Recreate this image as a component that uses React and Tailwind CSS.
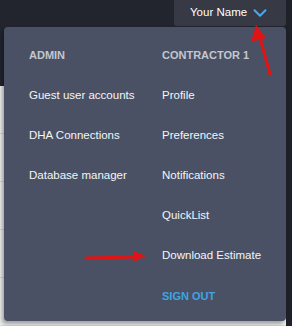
import React from "react";
import { ChevronDown } from "lucide-react";

const adminLinks = ["Guest user accounts", "DHA Connections", "Database manager"];
const contractorLinks = ["Profile", "Preferences", "Notifications", "QuickList", "Download Estimate"];

const MenuColumn = ({ title, links, signOut }) => (
  <div className="flex flex-col whitespace-nowrap">
    <div className="h-[38px] pb-[4px] flex items-center text-[11px] font-bold uppercase text-[#c3c7cf]">{title}</div>
    {links.map((l) => (
      <a key={l} href="#" className="h-[40px] flex items-center text-[11.5px] text-[#f4f5f7]">
        {l}
      </a>
    ))}
    {signOut && (
      <a href="#" className="h-[40px] flex items-center text-[11px] font-bold uppercase text-[#3fa4e2]">
        Sign out
      </a>
    )}
  </div>
);

const App = () => {
  return (
    <div
      className="relative w-[292px] h-[326px] overflow-hidden flex bg-[#f1f1f1]"
      style={{ fontFamily: '"Liberation Sans", Arial, sans-serif' }}
    >
      <div className="flex-1 flex flex-col">
        <header className="h-[86px] bg-[#22252e] flex justify-end items-start">
          <button className="h-[26px] w-[112px] rounded-b-[3px] bg-[#373a44] flex items-center pl-[16px] gap-[2px] text-[11.5px] text-white">
            Your Name
            <ChevronDown size={22} strokeWidth={2.2} className="text-[#4aa9ec]" />
          </button>
        </header>
        {[0, 1, 2, 3, 4].map((i) => (
          <div key={i} className="h-[48px] shrink-0 border-b border-[#d9d9d9]" />
        ))}
      </div>
      <div className="w-[6px] bg-[#1f2129]" />

      {/* user dropdown */}
      <div className="absolute left-[4px] top-[27px] w-[282px] h-[294px] rounded-[4px] bg-[#4a5165] shadow-[-2px_3px_4px_rgba(0,0,0,0.35)] pt-[11px] pl-[25px] flex">
        <div className="w-[133px]">
          <MenuColumn title="Admin" links={adminLinks} />
        </div>
        <MenuColumn title="Contractor 1" links={contractorLinks} signOut />
      </div>

      {/* annotation arrows */}
      <svg className="absolute inset-0 pointer-events-none" width="292" height="326">
        <line x1="270" y1="74" x2="260" y2="38" stroke="#e01414" strokeWidth="3" strokeLinecap="round" />
        <polygon points="256,25 251,42 266,38" fill="#e01414" />
        <line x1="86" y1="258" x2="136" y2="257" stroke="#e01414" strokeWidth="3" strokeLinecap="round" />
        <polygon points="146,256 133,251 133,262" fill="#e01414" />
      </svg>
    </div>
  );
};

export default App;
